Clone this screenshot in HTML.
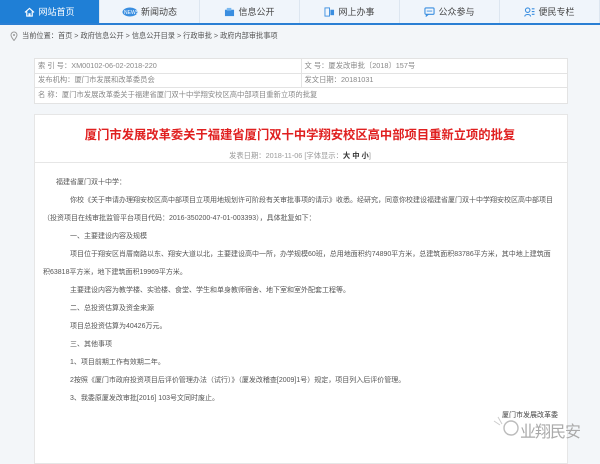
<!DOCTYPE html>
<html><head><meta charset="utf-8"><style>
*{margin:0;padding:0;box-sizing:border-box}
body{width:600px;height:454px;overflow:hidden;background:#f3f6f9;font-family:"Liberation Sans","Noto Sans CJK SC",sans-serif;color:#555;position:relative}
.nav{position:absolute;left:0;top:0;width:600px;height:25px;background:#f0f5fb;border-bottom:2px solid #2a7fd4;display:flex}
.nav div{flex:1;display:flex;align-items:center;justify-content:center;font-size:9px;color:#444;border-right:1px solid #dde6f0;gap:3px}
.nav div.on{background:#1f7fd6;color:#fff}
.ic{width:11px;height:10px;display:inline-block}
.crumb{position:absolute;left:10px;top:31px;font-size:7.2px;color:#555;display:flex;align-items:center;gap:4px}
.tbl{position:absolute;left:34px;top:58px;width:534px;border:1px solid #e3e3e3;background:#fff;font-size:7.3px;color:#888}
.row{display:flex;height:14.5px;border-bottom:1px solid #e3e3e3;align-items:center}
.row:last-child{border-bottom:none}
.c{flex:1;padding-left:3px;height:100%;display:flex;align-items:center}
.c+.c{border-left:1px solid #e3e3e3}
.box{position:absolute;left:34px;top:114px;width:534px;height:350px;background:#fff;border:1px solid #e6e6e6}
.title{position:absolute;left:0;width:600px;top:125px;text-align:center;color:#e02020;font-size:12.3px;font-weight:bold;white-space:nowrap}
.date{position:absolute;left:0;width:600px;top:151px;text-align:center;font-size:7.3px;color:#999;white-space:nowrap}
.date b{color:#333}
.hr{position:absolute;left:0;right:0;top:47px;border-top:1px solid #e6e6e6}
.p{position:absolute;font-size:7px;color:#555;white-space:nowrap}
</style></head><body>
<div class="nav">
<div class="on"><svg class="ic" viewBox="0 0 12 11"><path d="M1 6L6 1.5L11 6M3 5v5h2.5V7.5h1V10H9V5" fill="none" stroke="#fff" stroke-width="1.3"/></svg>网站首页</div>
<div><svg class="ic" style="width:16px" viewBox="0 0 16 10"><ellipse cx="8" cy="5" rx="7.5" ry="4.5" fill="#3a8ee0"/><text x="2" y="7" font-size="5" fill="#fff" font-family="Liberation Sans">NEWS</text></svg>新闻动态</div>
<div><svg class="ic" viewBox="0 0 12 11"><rect x="1" y="3" width="10" height="7" fill="#3a8ee0"/><rect x="3" y="1" width="5" height="3" fill="#7ab8f0"/></svg>信息公开</div>
<div><svg class="ic" viewBox="0 0 12 11"><rect x="1" y="1" width="5" height="9" fill="none" stroke="#3a8ee0"/><rect x="7" y="3" width="4" height="6" fill="#3a8ee0"/></svg>网上办事</div>
<div><svg class="ic" viewBox="0 0 12 11"><rect x="1" y="1" width="10" height="7" rx="1" fill="none" stroke="#3a8ee0" stroke-width="1.2"/><path d="M3 4.5h6M3 8l-1 2.5 3-2.5" stroke="#3a8ee0" fill="none"/></svg>公众参与</div>
<div><svg class="ic" viewBox="0 0 12 11"><circle cx="4" cy="3.5" r="2.5" fill="none" stroke="#3a8ee0" stroke-width="1.2"/><path d="M0.8 10.5c0-3 6.4-3 6.4 0M8.5 2h3M8.5 5h3M8.5 8h3" stroke="#3a8ee0" fill="none" stroke-width="1.2"/></svg>便民专栏</div>
</div>
<div class="crumb"><svg width="8" height="10" viewBox="0 0 8 10"><path d="M4 9.5C2 7 1 5.5 1 4a3 3 0 016 0c0 1.5-1 3-3 5.5z" fill="none" stroke="#999"/><circle cx="4" cy="4" r="1" fill="#999"/></svg>当前位置：首页 &gt; 政府信息公开 &gt; 信息公开目录 &gt; 行政审批 &gt; 政府内部审批事项</div>
<div class="tbl">
<div class="row"><div class="c">索 引 号：XM00102-06-02-2018-220</div><div class="c">文 号：厦发改审批〔2018〕157号</div></div>
<div class="row"><div class="c">发布机构：厦门市发展和改革委员会</div><div class="c">发文日期：20181031</div></div>
<div class="row"><div class="c">名 称：厦门市发展改革委关于福建省厦门双十中学翔安校区高中部项目重新立项的批复</div></div>
</div>
<div class="box"><div class="hr"></div></div>
<div class="title">厦门市发展改革委关于福建省厦门双十中学翔安校区高中部项目重新立项的批复</div>
<div class="date">发表日期：2018-11-06 [字体显示：<b>大 中 小</b>]</div>
<div class="p" style="left:56px;top:177px">福建省厦门双十中学：</div>
<div class="p" style="left:70px;top:195px">你校《关于申请办理翔安校区高中部项目立项用地规划许可阶段有关审批事项的请示》收悉。经研究，同意你校建设福建省厦门双十中学翔安校区高中部项目</div>
<div class="p" style="left:43px;top:213px">（投资项目在线审批监管平台项目代码：2016-350200-47-01-003393），具体批复如下：</div>
<div class="p" style="left:70px;top:231px">一、主要建设内容及规模</div>
<div class="p" style="left:70px;top:249px">项目位于翔安区肖厝南路以东、翔安大道以北，主要建设高中一所，办学规模60班，总用地面积约74890平方米，总建筑面积83786平方米，其中地上建筑面</div>
<div class="p" style="left:43px;top:267px">积63818平方米，地下建筑面积19969平方米。</div>
<div class="p" style="left:70px;top:285px">主要建设内容为教学楼、实验楼、食堂、学生和单身教师宿舍、地下室和室外配套工程等。</div>
<div class="p" style="left:70px;top:303px">二、总投资估算及资金来源</div>
<div class="p" style="left:70px;top:321px">项目总投资估算为40426万元。</div>
<div class="p" style="left:70px;top:339px">三、其他事项</div>
<div class="p" style="left:70px;top:357px">1、项目前期工作有效期二年。</div>
<div class="p" style="left:70px;top:375px">2按照《厦门市政府投资项目后评价管理办法（试行）》（厦发改稽查[2009]1号）规定，项目列入后评价管理。</div>
<div class="p" style="left:70px;top:393px">3、我委原厦发改审批[2016] 103号文同时废止。</div>
<div class="p" style="left:502px;top:410px;color:#444">厦门市发展改革委</div>
<div class="p" style="left:520px;top:418px;font-size:16px;color:#aaa;letter-spacing:-1px">业翔民安</div>
<svg style="position:absolute;left:492px;top:416px" width="28" height="22" viewBox="0 0 28 22"><circle cx="19" cy="12" r="7" fill="none" stroke="#bbb" stroke-width="1.4"/><path d="M2 5l6 4M6 1l4 7" stroke="#ccc" fill="none"/></svg>
</body></html>
